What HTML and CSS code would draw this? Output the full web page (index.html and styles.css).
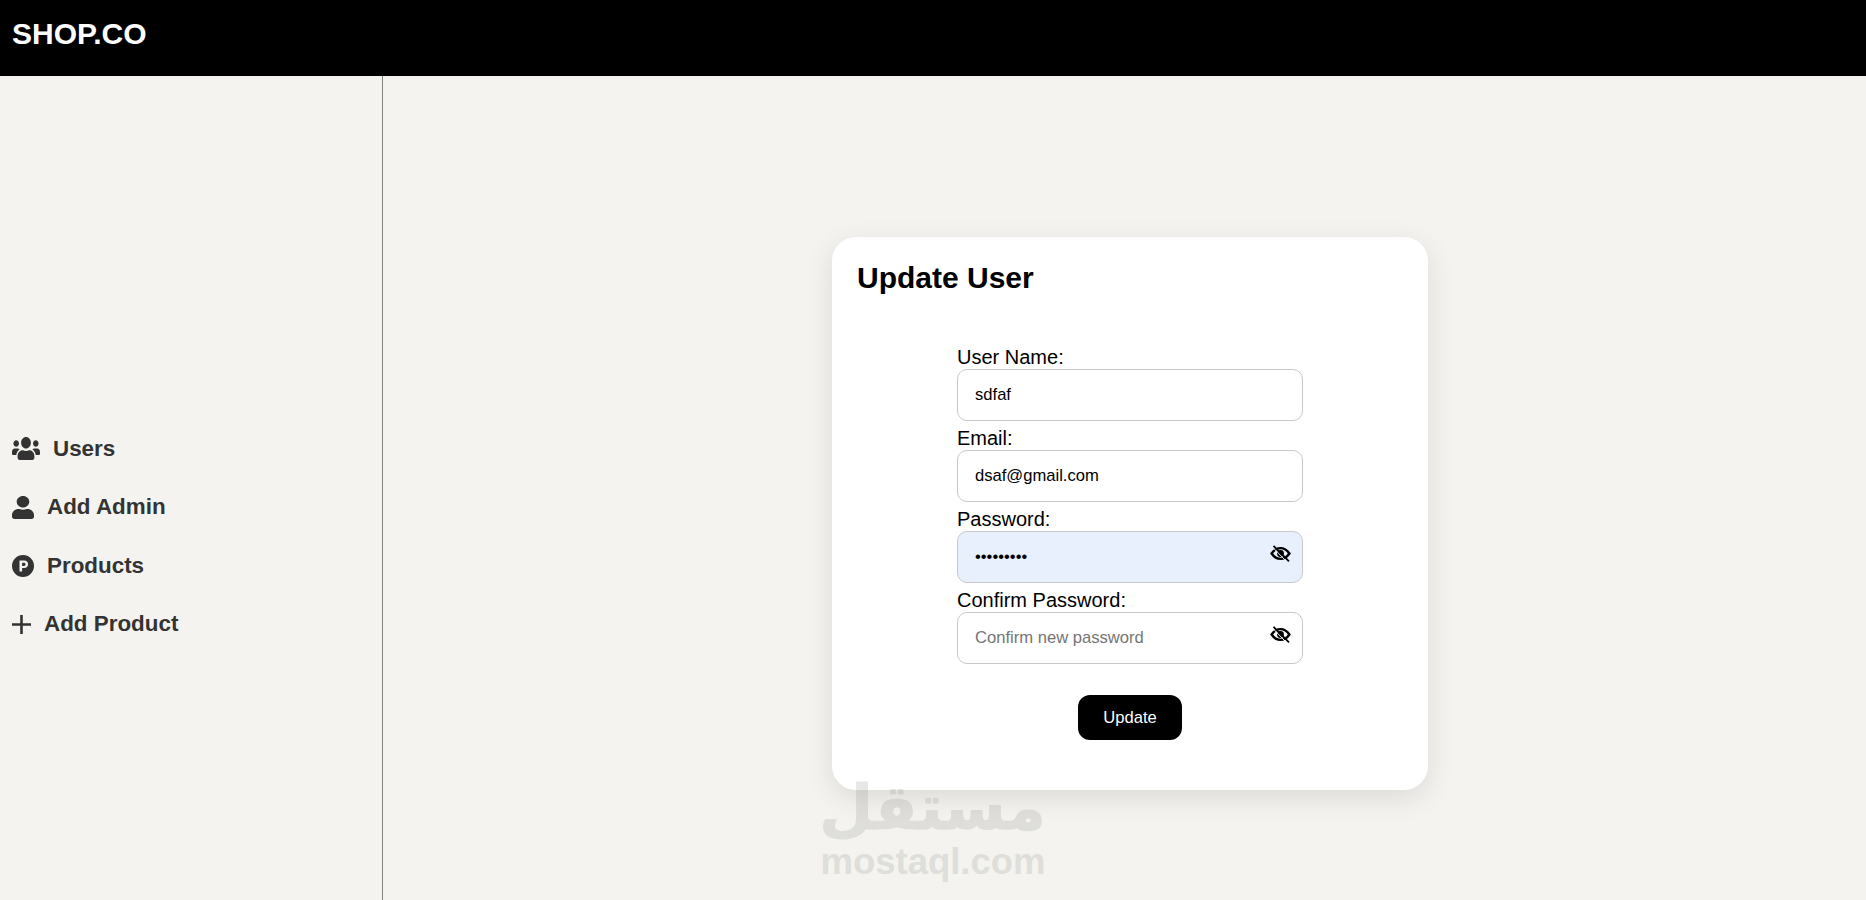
FILE: index.html
```html
<!DOCTYPE html>
<html lang="en">
  <head>
    <meta charset="utf-8">
    <title>Update User - SHOP.CO</title>
    <link rel="stylesheet" href="styles.css">
  </head>
  <body>
    <header class="topbar">
      <a class="logo" href="#">SHOP.CO</a>
    </header>
    <div class="layout">
      <aside class="sidebar">
        <a class="side-link side-users" href="#">
          <svg class="side-icon icon-users" viewBox="0 32 640 448" preserveAspectRatio="none"><path d="M96 224c35.3 0 64-28.7 64-64s-28.7-64-64-64-64 28.7-64 64 28.7 64 64 64zm448 0c35.3 0 64-28.7 64-64s-28.7-64-64-64-64 28.7-64 64 28.7 64 64 64zm32 32h-64c-17.6 0-33.5 7.1-45.1 18.6 40.3 22.1 68.9 62 75.1 109.4h66c17.7 0 32-14.3 32-32v-32c0-35.3-28.7-64-64-64zm-256 0c61.9 0 112-50.1 112-112S381.9 32 320 32 208 82.1 208 144s50.1 112 112 112zm76.8 32h-8.3c-20.8 10-43.9 16-68.5 16s-47.6-6-68.5-16h-8.3C179.6 288 128 339.6 128 403.2V432c0 26.5 21.5 48 48 48h288c26.5 0 48-21.5 48-48v-28.8c0-63.6-51.6-115.2-115.2-115.2zm-223.7-13.4C161.5 263.1 145.6 256 128 256H64c-35.3 0-64 28.7-64 64v32c0 17.7 14.3 32 32 32h65.9c6.3-47.4 34.9-87.3 75.2-109.4z"/></svg>
          Users
        </a>
        <a class="side-link" href="#">
          <svg class="side-icon icon-user" viewBox="0 0 448 512" preserveAspectRatio="none"><path d="M224 256c70.7 0 128-57.3 128-128S294.7 0 224 0 96 57.3 96 128s57.3 128 128 128zm89.6 32h-16.7c-22.2 10.2-46.9 16-72.9 16s-50.6-5.8-72.9-16h-16.7C60.2 288 0 348.2 0 422.4V464c0 26.5 21.5 48 48 48h352c26.5 0 48-21.5 48-48v-41.6c0-74.2-60.2-134.4-134.4-134.4z"/></svg>
          Add Admin
        </a>
        <a class="side-link" href="#">
          <svg class="side-icon icon-p" viewBox="0 0 22 22"><path fill-rule="evenodd" d="M11 0a11 11 0 1 1 0 22a11 11 0 0 1 0-22zM7.500 5.500v11h2.600v-3.400h2.100c2.300 0 3.900-1.500 3.900-3.800s-1.600-3.800-3.900-3.800zM10.100 7.700h1.800c1 0 1.700 .6 1.700 1.600s-.7 1.600-1.700 1.600h-1.800z"/></svg>
          Products
        </a>
        <a class="side-link" href="#">
          <svg class="side-icon icon-plus" viewBox="0 0 19 19"><path d="M8.200 0h2.600v8.200h8.200v2.600h-8.200v8.200H8.200v-8.200H0V8.200h8.200z"/></svg>
          Add Product
        </a>
      </aside>
      <main class="content">
        <section class="card">
          <h1>Update User</h1>
          <form class="form">
            <label for="name">User Name:</label>
            <input id="name" type="text" value="sdfaf">
            <label for="email">Email:</label>
            <input id="email" type="text" value="dsaf@gmail.com">
            <label for="password">Password:</label>
            <div class="pass-wrap">
              <input id="password" class="autofilled" type="password" value="123456789">
              <svg class="eye" viewBox="0 0 21 17"><path fill="none" stroke="currentColor" stroke-width="2.400" d="M1.600 8.500C4 5 7 3.100 10.500 3.100S17 5 19.400 8.500C17 12 14 13.900 10.500 13.900S4 12 1.600 8.500z"/><circle cx="10.500" cy="8.500" r="3.400"/><path fill="none" stroke="#e8f0fe" stroke-width="1" d="M2.600 2.200l15 15.500"/><path fill="none" stroke="currentColor" stroke-width="1.800" d="M3.500 .8l15.500 15.500"/></svg>
            </div>
            <label for="confirm">Confirm Password:</label>
            <div class="pass-wrap">
              <input id="confirm" type="password" placeholder="Confirm new password">
              <svg class="eye" viewBox="0 0 21 17"><path fill="none" stroke="currentColor" stroke-width="2.400" d="M1.600 8.500C4 5 7 3.100 10.500 3.100S17 5 19.400 8.500C17 12 14 13.900 10.500 13.900S4 12 1.600 8.500z"/><circle cx="10.500" cy="8.500" r="3.400"/><path fill="none" stroke="white" stroke-width="1" d="M2.600 2.200l15 15.500"/><path fill="none" stroke="currentColor" stroke-width="1.800" d="M3.500 .8l15.500 15.500"/></svg>
            </div>
            <button class="submit" type="button">Update</button>
          </form>
        </section>
      </main>
    </div>
    <div class="watermark">
      <div class="wm-ar" lang="ar" dir="rtl">مستقل</div>
      <div class="wm-en">mostaql.com</div>
    </div>
  </body>
</html>
```
FILE: styles.css
```css
* {
    box-sizing: border-box;
}

body {
    margin: 0;
    height: 900px;
    overflow: hidden;
    background: #f4f3ef;
    color: black;
    font-family: "Liberation Sans", Arial, sans-serif;
}

.topbar {
    height: 76px;
    padding: 17px 12px;
    background: black;
}

.logo {
    color: white;
    font-size: 30px;
    font-weight: bold;
    text-decoration: none;
}

.layout {
    display: flex;
    height: 824px;
}

.sidebar {
    width: 383px;
    padding: 97px 12px 0;
    border-right: 1px solid #808080;
    display: flex;
    flex-direction: column;
    justify-content: center;
    gap: 33px;
}

.side-link {
    display: flex;
    align-items: center;
    height: 25.500px;
    color: #333;
    font-size: 22.400px;
    font-weight: bold;
    text-decoration: none;
}

.side-icon {
    fill: #333;
    flex: none;
}

.icon-users {
    width: 28px;
    height: 23px;
    margin-right: 13px;
}

.icon-user {
    width: 22px;
    height: 23px;
    margin-right: 13px;
}

.icon-p {
    width: 22px;
    height: 22px;
    margin-right: 13px;
}

.icon-plus {
    width: 19px;
    height: 19px;
    margin-right: 13px;
}

.content {
    flex: 1;
    display: flex;
    align-items: center;
    justify-content: center;
    padding: 51px 0 0 11px;
}

.card {
    width: 596px;
    height: 553px;
    padding: 23px 25px;
    background: white;
    border-radius: 24px;
    box-shadow: 0 8px 28px rgba(0, 0, 0, .1);
}

.card h1 {
    margin: 0;
    font-size: 30px;
    line-height: 36px;
}

.form {
    width: 346px;
    margin: 50px auto 0;
}

.form label {
    display: block;
    font-size: 20px;
    line-height: 23px;
    margin-top: 6px;
}

.form input {
    display: block;
    width: 100%;
    height: 52px;
    padding: 0 17px;
    border: 1px solid #c8c8c8;
    border-radius: 10px;
    background: white;
    color: black;
    font-size: 16.600px;
    font-family: inherit;
}

.form input::placeholder {
    color: #757575;
}

.form .autofilled {
    background: #e8f0fe;
}

.pass-wrap {
    position: relative;
}

.eye {
    position: absolute;
    top: 14px;
    right: 12px;
    width: 21px;
    height: 17px;
    color: black;
}

.submit {
    display: block;
    width: 104px;
    height: 45px;
    margin: 31px auto 0;
    border: 0;
    border-radius: 12px;
    background: black;
    color: white;
    font-size: 16.600px;
    font-family: inherit;
}

.watermark {
    position: absolute;
    left: 820px;
    top: 772px;
    width: 226px;
    text-align: center;
    color: #8c8c88;
    opacity: .2;
    font-weight: bold;
    pointer-events: none;
}

.wm-ar {
    font-family: "DejaVu Sans", sans-serif;
    font-size: 62px;
    line-height: 71px;
    -webkit-text-stroke: 1px #8c8c88;
}

.wm-en {
    font-size: 36.500px;
    line-height: 38px;
}
```
